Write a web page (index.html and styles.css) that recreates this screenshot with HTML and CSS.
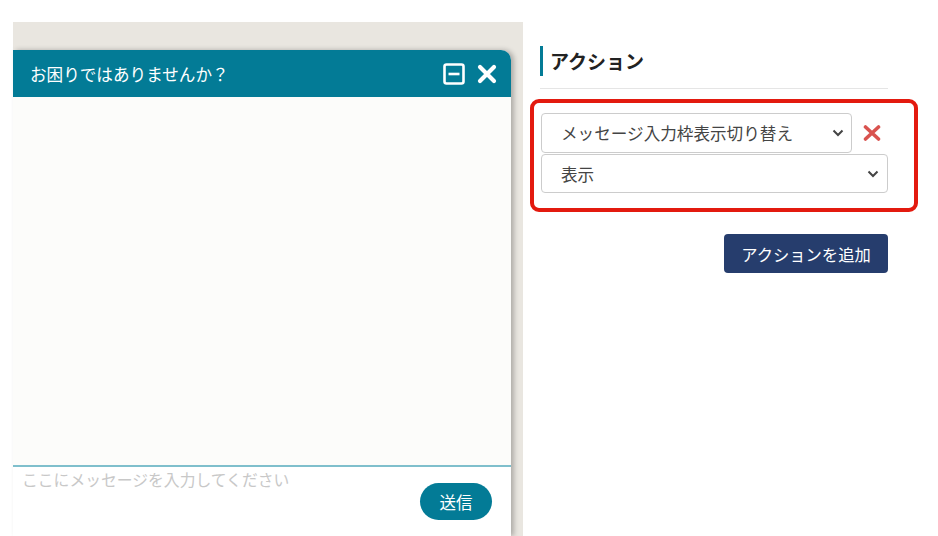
FILE: index.html
```html
<!DOCTYPE html>
<html lang="ja">
<head>
    <meta charset="UTF-8">
    <meta name="viewport" content="width=device-width, initial-scale=1.0">
    <title>アクション設定</title>
    <link rel="stylesheet" href="styles.css">
</head>
<body>
    <div class="page">
        <div class="preview">
            <div class="chat">
                <div class="chat-header">
                    <span class="chat-title">お困りではありませんか？</span>
                    <span class="chat-icons">
                        <svg width="23" height="22" viewBox="0 0 23 22">
                            <rect x="1.5" y="1.5" width="19" height="19" rx="2" fill="none" stroke="#fff" stroke-width="2.6"/>
                            <rect x="5.5" y="9.7" width="11" height="2.6" fill="#fff"/>
                        </svg>
                        <svg width="20" height="20" viewBox="0 0 20 20">
                            <path d="M3 3 L17 17 M17 3 L3 17" stroke="#fff" stroke-width="4.2" stroke-linecap="round"/>
                        </svg>
                    </span>
                </div>
                <div class="chat-body"></div>
                <div class="chat-input">
                    <div class="placeholder">ここにメッセージを入力してください</div>
                    <button type="button" class="send">送信</button>
                </div>
            </div>
        </div>

        <div class="settings">
            <h2 class="section-title">アクション</h2>
            <div class="action-box">
                <div class="action-row">
                    <div class="select short">
                        <span>メッセージ入力枠表示切り替え</span>
                        <svg class="chev" width="12" height="8" viewBox="0 0 12 8"><path d="M1.5 1.5 L6 6 L10.5 1.5" fill="none" stroke="#444" stroke-width="2"/></svg>
                    </div>
                    <svg class="remove" width="18" height="16" viewBox="0 0 18 16">
                        <path d="M2.5 2 L15.5 14 M15.5 2 L2.5 14" stroke="#d9534f" stroke-width="3.6" stroke-linecap="round"/>
                    </svg>
                </div>
                <div class="select">
                    <span>表示</span>
                    <svg class="chev" width="12" height="8" viewBox="0 0 12 8"><path d="M1.5 1.5 L6 6 L10.5 1.5" fill="none" stroke="#444" stroke-width="2"/></svg>
                </div>
            </div>
            <div class="add-row">
                <button type="button" class="add-btn">アクションを追加</button>
            </div>
        </div>
    </div>
</body>
</html>
```

FILE: styles.css
```css
body {
    margin: 0;
    background-color: #fff;
    font-family: "Noto Sans CJK JP", "Noto Sans", sans-serif;
    color: #333;
}
.page {
    display: flex;
    height: 536px;
    overflow: hidden;
}
.preview {
    margin: 22px 0 0 13px;
    width: 510px;
    background-color: #e9e6e0;
    display: flex;
    flex-direction: column;
}
.chat {
    margin-top: 28px;
    width: 498px;
    flex: 1;
    display: flex;
    flex-direction: column;
    background-color: #fff;
    border-top-right-radius: 10px;
    box-shadow: 3px 0 5px rgba(0, 0, 0, 0.25);
}
.chat-header {
    height: 47px;
    background-color: #037b96;
    border-top-right-radius: 10px;
    display: flex;
    align-items: center;
    justify-content: space-between;
    padding: 0 14px 0 17px;
    color: #fff;
}
.chat-title {
    font-size: 16.6px;
}
.chat-icons {
    display: flex;
    align-items: center;
    gap: 11px;
    padding-top: 1px;
}
.chat-icons svg {
    display: block;
}
.chat-body {
    height: 368px;
    background-color: #fcfcfa;
    border-bottom: 2px solid #7fbfcc;
}
.chat-input {
    flex: 1;
    position: relative;
    padding: 1px 9px;
}
.placeholder {
    font-size: 15.8px;
    color: #c8c8c8;
}
.send {
    position: absolute;
    right: 19px;
    top: 16px;
    width: 72px;
    height: 37px;
    border: none;
    border-radius: 19px;
    background-color: #037b96;
    color: #fff;
    font-family: inherit;
    font-size: 16.5px;
    padding: 0;
}
.settings {
    padding: 0 0 0 7px;
    width: 390px;
}
.section-title {
    margin: 46px 0 0 10px;
    width: 338px;
    font-size: 19px;
    font-weight: bold;
    color: #222;
    border-left: 3px solid #037b96;
    padding: 0 0 0 7px;
    height: 30px;
    line-height: 30px;
    position: relative;
}
.section-title::after {
    content: "";
    position: absolute;
    left: -3px;
    right: 0;
    top: 42px;
    border-bottom: 1px solid #e5e5e5;
}
.action-box {
    margin-top: 23px;
    width: 373px;
    height: 95px;
    border: 4px solid #e31a0f;
    border-radius: 9px;
    padding: 10px 0 0 7px;
    display: flex;
    flex-direction: column;
    gap: 1px;
}
.action-row {
    display: flex;
    align-items: center;
    gap: 11px;
}
.select {
    width: 347px;
    height: 39px;
    border: 1px solid #ccc;
    border-radius: 4px;
    background-color: #fff;
    display: flex;
    align-items: center;
    justify-content: space-between;
    padding: 0 8px 0 19px;
    box-sizing: border-box;
    font-size: 16.6px;
    color: #444;
}
.select.short {
    width: 311px;
    height: 40px;
    padding-right: 7px;
}
.chev {
    display: block;
}
.remove {
    display: block;
}
.add-row {
    width: 358px;
    display: flex;
    justify-content: flex-end;
    margin-top: 22px;
}
.add-btn {
    width: 164px;
    height: 39px;
    border: none;
    border-radius: 4px;
    background-color: #263d6d;
    color: #fff;
    font-family: inherit;
    font-size: 16.3px;
    padding: 0;
}
```
